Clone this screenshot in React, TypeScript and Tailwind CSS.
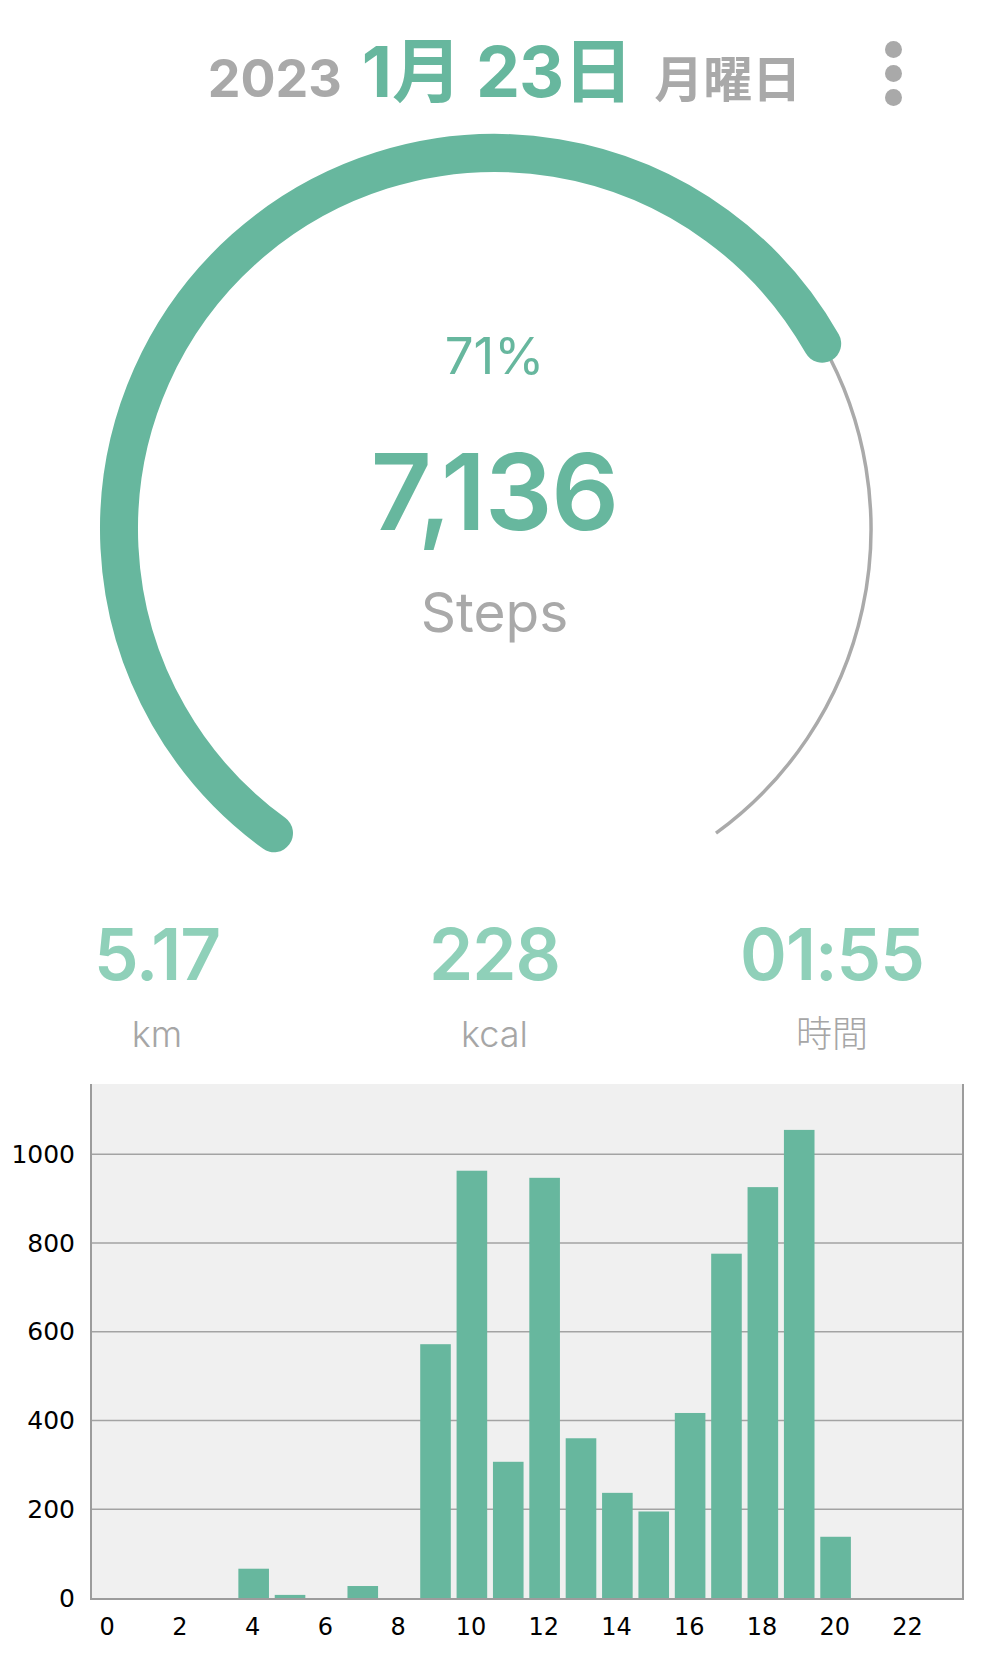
import React from 'react';

const values = [0, 0, 0, 0, 66, 7, 0, 27, 0, 572, 963, 307, 947, 360, 237, 195, 417, 776, 926, 1055, 138, 0, 0, 0];

function Gauge() {
  const cx = 495, cy = 405, r = 376;
  const pt = (deg: number) => {
    const a = (deg * Math.PI) / 180;
    return [cx + r * Math.cos(a), cy + r * Math.sin(a)];
  };
  const start = 126, total = 288, pct = 0.71;
  const mid = start + total * pct;
  const end = start + total;
  const [x1, y1] = pt(start);
  const [x2, y2] = pt(mid);
  const [x3, y3] = pt(end);
  const green = `M ${x1} ${y1} A ${r} ${r} 0 1 1 ${x2} ${y2}`;
  const gray = `M ${x2} ${y2} A ${r} ${r} 0 0 1 ${x3} ${y3}`;
  return (
    <svg className="absolute left-0 top-0" width={989} height={795} viewBox="0 0 989 795">
      <path d={gray} fill="none" stroke="#aaaaaa" strokeWidth={3.5} />
      <path d={green} fill="none" stroke="#67b79e" strokeWidth={38} strokeLinecap="round" />
    </svg>
  );
}

function Chart() {
  const innerW = 870;
  const innerH = 514;
  const slot = 36.37;
  const scale = 0.4437;
  const bw = 30.6;
  const grid = [200, 400, 600, 800, 1000];
  return (
    <div className="mt-[32px] font-['DejaVu_Sans',sans-serif]">
      <div className="flex items-start h-[516px]">
        <div className="w-[90px] pt-[26px] pr-[15px] flex flex-col items-end text-[25px] leading-[25px] text-black">
          {[1000, 800, 600, 400, 200, 0].map((v) => (
            <div key={v} className="h-[88.74px] flex items-center">{v}</div>
          ))}
        </div>
        <div className="w-[874px] h-[516px] bg-[#f0f0f0] border-l-2 border-r-2 border-b-2 border-[#9c9c9c]">
          <svg width={innerW} height={innerH} viewBox={`0 0 ${innerW} ${innerH}`} className="block">
            {grid.map((g) => (
              <line key={g} x1={0} x2={innerW} y1={innerH - g * scale} y2={innerH - g * scale} stroke="#a3a3a3" strokeWidth={1.6} />
            ))}
            {values.map((v, i) => {
              if (!v) return null;
              const h = v * scale;
              const c = -2 + slot * i + slot / 2;
              return <rect key={i} x={c - bw / 2} y={innerH - h} width={bw} height={h} fill="#67b79e" />;
            })}
          </svg>
        </div>
      </div>
      <div className="ml-[89px] w-[873px] grid grid-cols-24 mt-[15px] text-[24px] leading-[24px] text-black">
        {Array.from({ length: 24 }).map((_, i) => (
          <div key={i} className="text-center">{i % 2 === 0 ? i : ''}</div>
        ))}
      </div>
    </div>
  );
}

export default function App() {
  return (
    <div className="relative w-[989px] h-[1657px] bg-white overflow-hidden font-['Inter','Noto_Sans_CJK_JP',sans-serif]">
      {/* header */}
      <div className="h-[124px] pt-[36px] pl-[20px] flex justify-center items-baseline leading-[72px] font-bold">
        <span className="text-[52px] text-[#a9a9a9]">2023</span>
        <span className="ml-[20px] text-[70px] text-[#67b79e]">1月</span>
        <span className="ml-[14px] text-[70px] text-[#67b79e] tracking-[-1px]">23日</span>
        <span className="ml-[22px] text-[49px] text-[#a9a9a9]">月曜日</span>
      </div>
      <div className="absolute left-[885px] top-[41px] flex flex-col gap-[7px]">
        <div className="w-[17px] h-[17px] rounded-full bg-[#a9a9a9]" />
        <div className="w-[17px] h-[17px] rounded-full bg-[#a9a9a9]" />
        <div className="w-[17px] h-[17px] rounded-full bg-[#a9a9a9]" />
      </div>

      {/* gauge */}
      <div className="relative h-[795px] flex flex-col items-center pt-[206px]">
        <Gauge />
        <div className="relative text-[51px] leading-[51px] text-[#67b79e] font-normal">71%</div>
        <div className="relative mt-[58px] text-[106px] leading-[106px] text-[#67b79e] font-semibold tracking-[-1px]">7,136</div>
        <div className="relative mt-[40px] text-[55px] leading-[55px] text-[#a9a9a9] font-normal">Steps</div>
      </div>

      {/* stats */}
      <div className="flex justify-between px-[32px]">
        {[
          ['5.17', 'km'],
          ['228', 'kcal'],
          ['01:55', '時間'],
        ].map(([v, l]) => (
          <div key={l} className="w-[250px] flex flex-col items-center">
            <div className="text-[71px] leading-[70px] font-semibold text-[#8fd0b9] tracking-[-1px]">{v}</div>
            <div className="mt-[27px] text-[36px] leading-[36px] font-light text-[#a6a6a6]">{l}</div>
          </div>
        ))}
      </div>

      <Chart />
    </div>
  );
}
